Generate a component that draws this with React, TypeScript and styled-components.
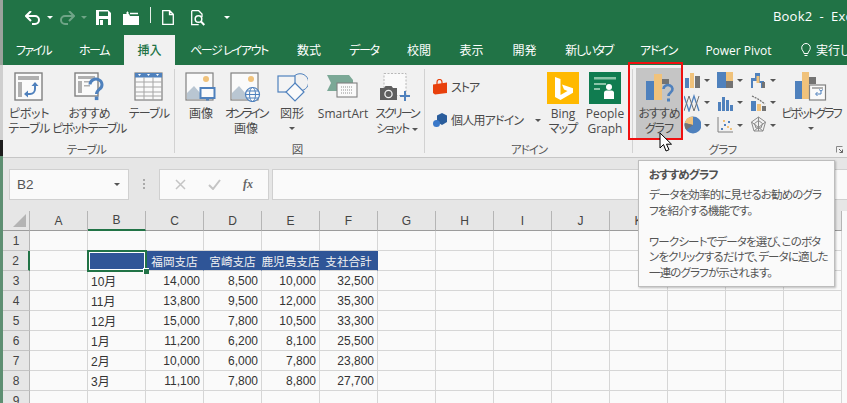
import React from 'react';
import styled, { createGlobalStyle } from 'styled-components';

const Global = createGlobalStyle`
	html, body {
		margin: 0;
		padding: 0;
		background: #fafafa;
	}
	body {
		width: 847px;
		height: 403px;
		overflow: hidden;
		font-family: "Open Sans", "Noto Sans CJK JP", sans-serif;
		font-feature-settings: "palt";
		font-size: 12px;
		color: #444;
	}
`;

const BLUE = '#4f81bd';
const ORANGE = '#f0c27b';
const GREY = '#737373';
const FRAME = '#808080';

const Screen = styled.div`
	display: flex;
	width: 847px;
	height: 403px;
	overflow: hidden;
`;

const LeftEdge = styled.div`
	width: 3px;
	flex: none;
	background: linear-gradient(#9aa39c 0 65px, #cfcfcf 65px 140px, #1d1d1d 140px 156px, #5e8f72 156px);
`;

const Window = styled.div`
	position: relative;
	flex: 1;
	display: flex;
	flex-direction: column;
	min-width: 0;
`;

const TitleBar = styled.div`
	display: flex;
	align-items: center;
	height: 35px;
	flex: none;
	background: #217346;
	color: #fff;
	overflow: hidden;
`;

const Qat = styled.div`
	display: flex;
	align-items: center;
	width: 770px;
	flex: none;
	padding-left: 21px;
	box-sizing: border-box;
	height: 100%;
`;

const QatItem = styled.span<{ $w: number }>`
	display: flex;
	align-items: center;
	justify-content: center;
	width: ${(p) => p.$w}px;
	flex: none;
`;

const QatSep = styled.span`
	width: 1px;
	height: 16px;
	background: #e6efe9;
	margin: 0 9px 5px 2px;
`;

const Title = styled.div`
	font-size: 13px;
	white-space: pre;
	letter-spacing: 0.2px;
	margin-bottom: 3px;
`;

const TabBar = styled.div`
	display: flex;
	height: 30px;
	flex: none;
	background: #217346;
	overflow: hidden;
`;

const Tab = styled.div<{ $w: number; $kern: number; $active?: boolean }>`
	display: flex;
	align-items: center;
	justify-content: center;
	gap: 5px;
	flex: none;
	width: ${(p) => p.$w}px;
	white-space: nowrap;
	font-size: 12px;
	letter-spacing: ${(p) => p.$kern}px;
	color: ${(p) => (p.$active ? '#217346' : '#fff')};
	background: ${(p) => (p.$active ? '#f1f1f1' : 'transparent')};
	font-weight: ${(p) => (p.$active ? 500 : 400)};
`;

const LastTab = styled.div`
	display: flex;
	align-items: center;
	gap: 5px;
	flex: none;
	padding-left: 14px;
	white-space: nowrap;
	font-size: 12px;
	color: #fff;
`;

const Ribbon = styled.div`
	display: flex;
	height: 93px;
	flex: none;
	box-sizing: border-box;
	background: #f1f1f1;
	border-bottom: 1px solid #c6c6c6;
`;

const Group = styled.section<{ $w: number; $pad: number; $last?: boolean }>`
	position: relative;
	width: ${(p) => p.$w}px;
	flex: none;
	box-sizing: border-box;
	display: flex;
	flex-direction: column;
	padding-left: ${(p) => p.$pad}px;
	&::after {
		content: '';
		display: ${(p) => (p.$last ? 'none' : 'block')};
		position: absolute;
		right: 0;
		top: 4px;
		bottom: 4px;
		width: 1px;
		background: #d2d2d2;
	}
`;

const GroupBody = styled.div`
	display: flex;
	height: 79px;
	padding-top: 3px;
	box-sizing: border-box;
`;

const GroupLabel = styled.div<{ $shift?: number; $kern?: number }>`
	height: 13px;
	line-height: 12px;
	font-size: 11.5px;
	text-align: center;
	color: #555;
	letter-spacing: ${(p) => p.$kern ?? -0.6}px;
	margin-left: ${(p) => -(p.$shift ?? 0)}px;
	padding-right: ${(p) => p.$shift ?? 0}px;
`;

const Launcher = styled.svg`
	position: absolute;
	right: 4px;
	bottom: 4px;
`;

const BigButton = styled.div<{ $w: number; $hover?: boolean }>`
	position: relative;
	width: ${(p) => p.$w}px;
	height: 70px;
	flex: none;
	display: flex;
	flex-direction: column;
	align-items: center;
	padding-top: 4px;
	box-sizing: border-box;
	background: ${(p) => (p.$hover ? '#c5c5c5' : 'transparent')};
	&::after {
		content: '';
		display: ${(p) => (p.$hover ? 'block' : 'none')};
		position: absolute;
		left: -8px;
		right: -1px;
		top: -6px;
		bottom: -2px;
		border: 2px solid #f01010;
	}
`;

const IconSlot = styled.div`
	height: 34px;
	flex: none;
	display: flex;
	justify-content: center;
`;

const Label = styled.div`
	line-height: 15px;
	font-size: 12px;
	text-align: center;
	white-space: nowrap;
	color: #4a4a4a;
`;

const Kana = styled.span<{ $k: number }>`
	letter-spacing: ${(p) => p.$k}px;
`;

const Caret = styled.span`
	display: inline-block;
	width: 0;
	height: 0;
	border-left: 3px solid transparent;
	border-right: 3px solid transparent;
	border-top: 3px solid #555;
	vertical-align: middle;
`;

const CaretLine = styled.div`
	line-height: 13px;
	height: 13px;
`;

const AddinColumn = styled.div`
	width: 118px;
	flex: none;
	display: flex;
	flex-direction: column;
	gap: 11px;
	padding: 8px 0 0 8px;
	box-sizing: border-box;
`;

const AddinRow = styled.div`
	display: flex;
	align-items: center;
	gap: 3px;
	height: 22px;
	white-space: nowrap;
	font-size: 12px;
	color: #4a4a4a;
`;

const AddinCaret = styled(Caret)`
	margin-left: 9px;
`;

const ChartGrid = styled.div`
	display: grid;
	grid-template-columns: 33px 33px 27px;
	grid-auto-rows: 22.5px;
	width: 95px;
	flex: none;
	padding: 1px 0 0 2px;
	box-sizing: border-box;
`;

const ChartCell = styled.div`
	display: flex;
	align-items: center;
	gap: 3px;
`;

const FormulaBar = styled.div`
	display: flex;
	align-items: flex-start;
	height: 53px;
	flex: none;
	box-sizing: border-box;
	background: #e6e6e6;
	padding: 11px 0 0 6px;
`;

const NameBox = styled.div`
	display: flex;
	align-items: center;
	justify-content: space-between;
	width: 120px;
	height: 31px;
	flex: none;
	box-sizing: border-box;
	background: #fafafa;
	border: 1px solid #d0d0d0;
	padding: 0 8px 0 7px;
	font-family: "Liberation Sans", sans-serif;
	font-size: 13.5px;
	color: #555;
`;

const Dots = styled.div`
	display: flex;
	flex-direction: column;
	gap: 2px;
	width: 30px;
	flex: none;
	align-items: center;
	margin-top: 10px;
	span {
		width: 2px;
		height: 2px;
		background: #aaa;
	}
`;

const FxBox = styled.div`
	display: flex;
	align-items: center;
	justify-content: space-around;
	width: 110px;
	height: 31px;
	flex: none;
	box-sizing: border-box;
	background: #fafafa;
	border: 1px solid #d0d0d0;
	padding: 0 4px;
	margin-right: 3px;
`;

const FxGlyph = styled.span`
	font-family: "Liberation Serif", serif;
	font-style: italic;
	font-weight: 700;
	font-size: 12px;
	color: #666;
`;

const FormulaInput = styled.div`
	flex: 1;
	height: 31px;
	box-sizing: border-box;
	background: #fafafa;
	border: 1px solid #d0d0d0;
	border-right: 0;
`;

const Sheet = styled.div`
	display: grid;
	grid-template-columns: 27px repeat(14, 58px);
	grid-auto-rows: 20px;
	background: #fafafa;
	font-family: "Liberation Sans", "Noto Sans CJK JP", sans-serif;
	font-size: 12px;
	color: #333;
`;

const Corner = styled.div`
	position: relative;
	background: #e6e6e6;
	border-right: 1px solid #b5b5b5;
	border-bottom: 1px solid #9c9c9c;
	&::after {
		content: '';
		position: absolute;
		right: 3px;
		bottom: 3px;
		width: 0;
		height: 0;
		border-left: 13px solid transparent;
		border-bottom: 13px solid #b4b4b4;
	}
`;

const ColHead = styled.div<{ $on?: boolean }>`
	display: flex;
	align-items: center;
	justify-content: center;
	box-sizing: border-box;
	background: #e6e6e6;
	border-right: 1px solid #b5b5b5;
	border-bottom: ${(p) => (p.$on ? '2px solid #217346' : '1px solid #9c9c9c')};
	color: #444;
`;

const RowHead = styled.div<{ $on?: boolean }>`
	display: flex;
	align-items: center;
	justify-content: center;
	box-sizing: border-box;
	background: #e6e6e6;
	border-right: ${(p) => (p.$on ? '2px solid #217346' : '1px solid #b5b5b5')};
	border-bottom: 1px solid #c4c4c4;
	color: #444;
`;

const Cell = styled.div<{ $kind?: 'head' | 'num' | 'text' | 'selected' }>`
	position: relative;
	display: flex;
	align-items: center;
	box-sizing: border-box;
	white-space: nowrap;
	overflow: ${(p) => (p.$kind === 'selected' ? 'visible' : 'hidden')};
	border-right: 1px solid ${(p) => (p.$kind === 'head' || p.$kind === 'selected' ? '#2f5597' : '#d6d6d6')};
	border-bottom: 1px solid #d6d6d6;
	background: ${(p) => (p.$kind === 'head' || p.$kind === 'selected' ? '#2f5597' : 'transparent')};
	color: ${(p) => (p.$kind === 'head' ? '#f2f2f2' : '#333')};
	justify-content: ${(p) => (p.$kind === 'num' ? 'flex-end' : p.$kind === 'head' ? 'center' : 'flex-start')};
	padding: ${(p) => (p.$kind === 'num' ? '0 3px 0 0' : p.$kind === 'head' ? '0' : '0 0 0 3px')};
	font-size: ${(p) => (p.$kind === 'head' ? '11.6px' : '12px')};
	font-feature-settings: normal;
`;

const SelectBox = styled.div`
	position: absolute;
	left: -1px;
	top: -1px;
	right: -2px;
	bottom: -2px;
	border: 2px solid #217346;
	outline: 1px solid #fff;
	outline-offset: -3px;
	z-index: 2;
	&::after {
		content: '';
		position: absolute;
		right: -4px;
		bottom: -4px;
		width: 5px;
		height: 5px;
		background: #217346;
		border: 1px solid #fff;
		border-width: 1px 0 0 1px;
	}
`;

const Tooltip = styled.div`
	position: absolute;
	left: 635px;
	top: 160px;
	width: 197px;
	height: 127px;
	box-sizing: border-box;
	padding: 6px 10px;
	background: #fafafa;
	border: 1px solid #bdbdbd;
	box-shadow: 1px 1px 2px rgba(0, 0, 0, 0.25);
	z-index: 5;
	color: #555;
	font-size: 11.5px;
	letter-spacing: -0.85px;
`;

const TipTitle = styled.div`
	font-weight: 700;
	line-height: 16px;
	margin-bottom: 4px;
	color: #505050;
`;

const TipLine = styled.div`
	line-height: 15.5px;
	min-height: 15.5px;
	white-space: nowrap;
`;

const Pointer = styled.svg`
	position: absolute;
	left: 656px;
	top: 132px;
	z-index: 6;
`;

/* ---------- drawings ---------- */

const DOTTED = '#b0b0b0';

const Frame = () => <rect x="1" y="1" width="27" height="27" fill="#fafafa" stroke={FRAME} strokeWidth="1.4" />;

const PivotIcon = () => (
	<svg width="30" height="30" viewBox="0 0 30 30">
		<Frame />
		<rect x="4" y="4" width="21" height="4" fill={DOTTED} />
		<rect x="4" y="10" width="4" height="15" fill={DOTTED} />
		<path d="M21 11v6a5 5 0 0 1-5 5h-3" fill="none" stroke={BLUE} strokeWidth="2" />
		<path d="M17.5 14l3.5-4 3.5 4zM14 18.5l-4 3.5 4 3.5z" fill={BLUE} />
	</svg>
);

const RecommendPivotIcon = () => (
	<svg width="30" height="32" viewBox="0 0 30 32">
		<rect x="1" y="1" width="23" height="23" fill="#fafafa" stroke={FRAME} strokeWidth="1.4" />
		<rect x="4" y="4" width="17" height="3" fill={DOTTED} />
		<rect x="4" y="9" width="4" height="12" fill={DOTTED} />
		<rect x="10" y="9" width="8" height="1.5" fill={DOTTED} />
		<rect x="10" y="13" width="6" height="1.5" fill={DOTTED} />
		<path d="M16 12.5a6 5.5 0 1 1 9.5 4.6c-2 1.6-3 2.4-3 4.9" fill="none" stroke={BLUE} strokeWidth="3" />
		<rect x="20.8" y="24.5" width="3.6" height="3.6" fill={BLUE} />
	</svg>
);

const TableIcon = () => (
	<svg width="30" height="30" viewBox="0 0 30 30">
		<rect x="1" y="1" width="27" height="27" fill="#fafafa" stroke={FRAME} strokeWidth="1.2" />
		<rect x="1" y="1" width="27" height="4.5" fill={BLUE} />
		{[10, 15, 20, 24].map((y) => (
			<line key={y} x1="1" x2="28" y1={y} y2={y} stroke="#a6a6a6" />
		))}
		{[10, 19].map((x) => (
			<line key={x} y1="5" y2="28" x1={x} x2={x} stroke="#a6a6a6" />
		))}
		<path d="M4 2h3l-1.5 2zM13 2h3l-1.5 2zM22 2h3l-1.5 2z" fill="#fff" />
	</svg>
);

const PictureBase = () => (
	<>
		<rect x="1" y="1" width="27" height="27" fill="#fafafa" stroke={FRAME} strokeWidth="1.2" />
		<circle cx="21" cy="7" r="3" fill={ORANGE} />
		<path d="M2 27V21l7-7 7 8 3 5z" fill="#b9c6d2" />
	</>
);

const PictureIcon = () => (
	<svg width="32" height="30" viewBox="0 0 32 30">
		<PictureBase />
		<rect x="15.5" y="16" width="14" height="10" fill="#fafafa" stroke={BLUE} strokeWidth="2" />
		<path d="M21 27h3v1.5h-3z" fill={BLUE} />
	</svg>
);

const OnlinePictureIcon = () => (
	<svg width="32" height="30" viewBox="0 0 32 30">
		<PictureBase />
		<circle cx="22.5" cy="22.5" r="7" fill="#fafafa" stroke={BLUE} strokeWidth="1.2" />
		<ellipse cx="22.5" cy="22.5" rx="3" ry="7" fill="none" stroke={BLUE} />
		<path d="M15.5 22.5h14M16.5 19h12M16.5 26h12" stroke={BLUE} fill="none" />
	</svg>
);

const ShapesIcon = () => (
	<svg width="32" height="32" viewBox="0 0 32 32">
		<path d="M17 5.5a8.5 8.5 0 1 1 9 13" fill="none" stroke={BLUE} strokeWidth="1" />
		<rect x="2" y="4" width="17" height="16" fill="#f4f4f4" stroke={BLUE} strokeWidth="1.2" />
		<path d="M19 11l9 9-9 9-9-9z" fill="#fafafa" stroke={BLUE} strokeWidth="1.2" />
	</svg>
);

const SmartArtIcon = () => (
	<svg width="32" height="30" viewBox="0 0 32 30">
		<path d="M0 3h22l4 5v3H10v8l-2 0H0l4-8z" fill="#7ba896" />
		<rect x="10" y="11" width="20" height="14" fill="#fafafa" stroke={FRAME} strokeWidth="1.1" />
		<path d="M14 15h12M14 18h12M14 21h12" stroke="#909090" strokeDasharray="1 1" />
	</svg>
);

const ScreenshotIcon = () => (
	<svg width="34" height="30" viewBox="0 0 34 30">
		<rect x="4" y="1.5" width="22" height="22" fill="#fafafa" stroke="#b8b8b8" strokeDasharray="2 1.5" />
		<path d="M0 16h4l1.5-2h6l1.5 2h4v12H0z" fill="#5f5f5f" />
		<circle cx="8.5" cy="22" r="3.6" fill="#5f5f5f" stroke="#f1f1f1" strokeWidth="1.3" />
		<path d="M24 19h2v4h4v2h-4v4h-2v-4h-4v-2h4z" fill={BLUE} />
	</svg>
);

const StoreIcon = () => (
	<svg width="15" height="16" viewBox="0 0 15 16">
		<path d="M0 5.5l14-2V14l-12 1.5L0 14z" fill="#e8400c" />
		<path d="M4 5V3a2.5 2.5 0 0 1 5 0v2" fill="none" stroke="#e8400c" strokeWidth="1.2" />
	</svg>
);

const AddinIcon = () => (
	<svg width="15" height="15" viewBox="0 0 15 15">
		<path d="M4 2.5L9 0l5 2.5V9l-5 3-5-3z" fill="#2a5d9c" />
		<circle cx="3.5" cy="10.5" r="3.5" fill="#3a78c9" />
	</svg>
);

const BingIcon = () => (
	<svg width="32" height="32" viewBox="0 0 32 32">
		<rect width="32" height="32" fill="#ffb900" />
		<path d="M8 5l5.5 2v16l7-4-3.5-1.6-2-5 11 3.8v4.6L13.5 28 8 25z" fill="#fff" />
	</svg>
);

const PeopleIcon = () => (
	<svg width="32" height="32" viewBox="0 0 32 32">
		<rect width="32" height="32" fill="#107c50" />
		<path d="M5 5h22v2.5H5zM5 11h12v2H5zM5 16h6v2H5z" fill="#8cc4a8" />
		<circle cx="20" cy="15" r="3" fill="#fff" />
		<path d="M15 27v-6q0-2.500 2.500-2.500h5q2.500 0 2.500 2.500v6z" fill="#fff" />
	</svg>
);

const RecommendChartIcon = () => (
	<svg width="32" height="32" viewBox="0 0 32 32">
		<rect x="3" y="9" width="8" height="19" fill={BLUE} />
		<rect x="11" y="2" width="8" height="26" fill={ORANGE} />
		<rect x="19" y="7" width="7" height="5" fill={GREY} />
		<path d="M20.500 17a4.500 4 0 1 1 7.300 3.200c-1.600 1.300-2.300 2-2.300 3.800" fill="none" stroke={BLUE} strokeWidth="2.600" />
		<rect x="24" y="26.500" width="3" height="3" fill={BLUE} />
	</svg>
);

const PivotChartIcon = () => (
	<svg width="32" height="30" viewBox="0 0 32 30">
		<rect x="0" y="9" width="7" height="18" fill={BLUE} />
		<rect x="7" y="0" width="7" height="27" fill={ORANGE} />
		<rect x="14" y="5" width="7" height="7" fill={GREY} />
		<rect x="14.500" y="13" width="16" height="15" fill="#fafafa" stroke={FRAME} strokeWidth="1.2" />
		<rect x="17" y="15" width="11" height="2" fill={DOTTED} />
		<path d="M26 19v3h-5M24 17.500l2 1.500 2-1.500M22.500 20l-2 2 2 2" fill="none" stroke={BLUE} />
	</svg>
);

const chartIcons = [
	<>
		<rect x="1" y="7" width="4" height="10" fill={BLUE} />
		<rect x="6" y="2" width="4" height="15" fill={ORANGE} />
		<rect x="11" y="5" width="5" height="12" fill={GREY} />
	</>,
	<>
		<rect x="0" y="1" width="9" height="16" fill={BLUE} />
		<rect x="9" y="1" width="7" height="9" fill={ORANGE} />
		<rect x="9" y="10" width="7" height="7" fill={GREY} />
	</>,
	<>
		<path d="M1 17V7h4V2h5v8h4v7h-3v-5H8V5H7v5H3v7z" fill={BLUE} />
		<rect x="6.500" y="5" width="3" height="7" fill={ORANGE} />
		<rect x="12" y="11" width="3" height="6" fill={GREY} />
	</>,
	<>
		<path d="M0 2l5 15 5-15 5 15" fill="none" stroke={BLUE} strokeWidth="1.3" />
		<path d="M0 17L5 2l5 15 5-15" fill="none" stroke={GREY} strokeWidth="1" />
	</>,
	<>
		<rect x="1" y="8" width="3" height="9" fill={BLUE} />
		<rect x="5" y="3" width="3" height="14" fill={BLUE} />
		<rect x="9" y="6" width="3" height="11" fill={BLUE} />
		<rect x="13" y="11" width="3" height="6" fill={BLUE} />
	</>,
	<>
		<rect x="1" y="7" width="5" height="10" fill={BLUE} />
		<rect x="7" y="10" width="4" height="7" fill={ORANGE} />
		<rect x="12" y="12" width="4" height="5" fill={GREY} />
		<path d="M2 2l6 3 7 5" fill="none" stroke={GREY} strokeDasharray="2 1" strokeWidth="1.300" />
	</>,
	<>
		<circle cx="9" cy="9" r="8.500" fill={BLUE} />
		<path d="M9 9V.500A8.500 8.500 0 0 0 .800 7z" fill={ORANGE} />
		<path d="M9 9L.800 7a8.500 8.500 0 0 0 1.500 7z" fill={GREY} />
	</>,
	<>
		<path d="M1 1v15h15" fill="none" stroke={FRAME} />
		<path d="M4 12h2v2H4zM7 8h2v2H7zM11 5h2v2h-2z" fill={BLUE} />
		<path d="M6 4h2v2H6zM10 10h2v2h-2zM13 12h2v2h-2z" fill={ORANGE} />
	</>,
	<path
		d="M8.500 1l7 5-2.500 9H4L1.500 6zM8.500 1v14M1.500 6l11.500 9M15.500 6L4 15M4.500 7.500l4-3 4 3-1.500 4.500H6z"
		fill="none"
		stroke="#8c8c8c"
	/>,
];

const UndoIcon = ({ dim }: { dim?: boolean }) => (
	<svg width="16" height="14" viewBox="0 0 16 14" style={dim ? { opacity: 0.35, transform: 'scaleX(-1)' } : undefined}>
		<path d="M2 5h8a4 4 0 0 1 0 8H7" fill="none" stroke="#fff" strokeWidth="2" />
		<path d="M6 0L1 5l5 5" fill="none" stroke="#fff" strokeWidth="2" />
	</svg>
);

const WhiteCaret = styled(Caret)<{ $dim?: boolean }>`
	border-top-color: #fff;
	opacity: ${(p) => (p.$dim ? 0.35 : 1)};
`;

const SaveIcon = () => (
	<svg width="15" height="15" viewBox="0 0 15 15">
		<path d="M0 0h12l3 3v12H0z" fill="#fff" />
		<rect x="3" y="1.500" width="9" height="4.500" fill="#217346" />
		<rect x="3" y="9" width="9" height="6" fill="#217346" />
		<rect x="4" y="10" width="3" height="5" fill="#fff" />
	</svg>
);

const FolderIcon = () => (
	<svg width="16" height="14" viewBox="0 0 16 14">
		<path d="M0 3h6l1 2h9v9H0z" fill="#fff" />
		<path d="M3 2h3M4.500 .500v3" stroke="#fff" />
		<path d="M7 2.500h8" stroke="#fff" strokeWidth="1.500" />
	</svg>
);

const NewDocIcon = () => (
	<svg width="12" height="15" viewBox="0 0 12 15">
		<path d="M.700.700h7l3.600 3.600v10H.700zM7.500 1v3.500H11" fill="none" stroke="#fff" strokeWidth="1.300" />
	</svg>
);

const PreviewIcon = () => (
	<svg width="14" height="16" viewBox="0 0 14 16">
		<path d="M.700.700h7l3.300 3.300v3M.700.700v14h7" fill="none" stroke="#fff" strokeWidth="1.300" />
		<circle cx="7.500" cy="9" r="3.300" fill="none" stroke="#fff" strokeWidth="1.500" />
		<path d="M10 11.500l3.300 3.500" stroke="#fff" strokeWidth="2" />
	</svg>
);

const BulbIcon = () => (
	<svg width="10" height="14" viewBox="0 0 10 14">
		<path d="M3 10.500c0-2-2.300-3-2.300-5.700a4.300 4.300 0 0 1 8.600 0C9.300 7.500 7 8.500 7 10.500zM3.500 12.500h3" fill="none" stroke="#fff" />
	</svg>
);

/* ---------- data ---------- */

const TABS = [
	{ label: 'ファイル', w: 61, kern: -1.6 },
	{ label: 'ホーム', w: 60, kern: -1.5 },
	{ label: '挿入', w: 51, kern: 0 },
	{ label: 'ページ レイアウト', w: 108, kern: -1.5 },
	{ label: '数式', w: 52, kern: 0 },
	{ label: 'データ', w: 58, kern: -1.2 },
	{ label: '校閲', w: 52, kern: 0 },
	{ label: '表示', w: 53, kern: 0 },
	{ label: '開発', w: 53, kern: 0 },
	{ label: '新しいタブ', w: 76, kern: -1.4 },
	{ label: 'アドイン', w: 63, kern: -1.2 },
	{ label: 'Power Pivot', w: 97, kern: 0 },
];
const COLUMNS = 'ABCDEFGHIJKLMN'.split('');
const DATA = [
	['10月', '14,000', '8,500', '10,000', '32,500'],
	['11月', '13,800', '9,500', '12,000', '35,300'],
	['12月', '15,000', '7,800', '10,500', '33,300'],
	['1月', '11,200', '6,200', '8,100', '25,500'],
	['2月', '10,000', '6,000', '7,800', '23,800'],
	['3月', '11,100', '7,800', '8,800', '27,700'],
];
const HEADS = ['福岡支店', '宮崎支店', '鹿児島支店', '支社合計'];

const emptyCells = (from: number, row: number) =>
	COLUMNS.slice(from).map((c) => <Cell key={`${c}${row}`} />);

const App = () => (
	<Screen>
		<Global />
		<LeftEdge />
		<Window>
			<TitleBar>
				<Qat>
					<QatItem $w={18}><UndoIcon /></QatItem>
					<QatItem $w={16}><WhiteCaret /></QatItem>
					<QatItem $w={18}><UndoIcon dim /></QatItem>
					<QatItem $w={16}><WhiteCaret $dim /></QatItem>
					<QatItem $w={22}><SaveIcon /></QatItem>
					<QatItem $w={34}><FolderIcon /></QatItem>
					<QatSep />
					<QatItem $w={16}><NewDocIcon /></QatItem>
					<QatItem $w={44}><PreviewIcon /></QatItem>
					<QatItem $w={14}><WhiteCaret /></QatItem>
				</Qat>
				<Title>Book2  -  Excel</Title>
			</TitleBar>
			<TabBar>
				{TABS.map((t) => (
					<Tab key={t.label} $w={t.w} $kern={t.kern} $active={t.label === '挿入'}>{t.label}</Tab>
				))}
				<LastTab><BulbIcon />実行したい作業</LastTab>
			</TabBar>
			<Ribbon>
				<Group $w={172} $pad={5}>
					<GroupBody>
						<BigButton $w={42}><IconSlot><PivotIcon /></IconSlot><Label><Kana $k={-0.3}>ピボット</Kana><br /><Kana $k={-0.6}>テーブル</Kana></Label></BigButton>
						<BigButton $w={78}><IconSlot><RecommendPivotIcon /></IconSlot><Label><Kana $k={-1}>おすすめ</Kana><br /><Kana $k={-1.4}>ピボットテーブル</Kana></Label></BigButton>
						<BigButton $w={42}><IconSlot><TableIcon /></IconSlot><Label><Kana $k={-0.8}>テーブル</Kana></Label></BigButton>
					</GroupBody>
					<GroupLabel $shift={5}>テーブル</GroupLabel>
				</Group>
				<Group $w={250} $pad={5}>
					<GroupBody>
						<BigButton $w={42}><IconSlot><PictureIcon /></IconSlot><Label>画像</Label></BigButton>
						<BigButton $w={48}><IconSlot><OnlinePictureIcon /></IconSlot><Label><Kana $k={-2.2}>オンライン</Kana><br />画像</Label></BigButton>
						<BigButton $w={44}><IconSlot><ShapesIcon /></IconSlot><Label>図形</Label><CaretLine><Caret /></CaretLine></BigButton>
						<BigButton $w={58}><IconSlot><SmartArtIcon /></IconSlot><Label>SmartArt</Label></BigButton>
						<BigButton $w={50}><IconSlot><ScreenshotIcon /></IconSlot><Label><Kana $k={-2}>スクリーン</Kana><br /><Kana $k={-1.5}>ショット</Kana> <Caret /></Label></BigButton>
					</GroupBody>
					<GroupLabel $shift={5} $kern={0}>図</GroupLabel>
				</Group>
				<Group $w={208} $pad={0}>
					<GroupBody>
						<AddinColumn>
							<AddinRow><StoreIcon /><Kana $k={-1}>ストア</Kana></AddinRow>
							<AddinRow><AddinIcon /><Kana $k={-0.8}>個人用アドイン</Kana><AddinCaret /></AddinRow>
						</AddinColumn>
						<BigButton $w={40}><IconSlot><BingIcon /></IconSlot><Label>Bing<br /><Kana $k={-0.8}>マップ</Kana></Label></BigButton>
						<BigButton $w={44}><IconSlot><PeopleIcon /></IconSlot><Label>People<br />Graph</Label></BigButton>
					</GroupBody>
					<GroupLabel $kern={-1}>アドイン</GroupLabel>
				</Group>
				<Group $w={214} $pad={3} $last>
					<GroupBody>
						<BigButton $w={46} $hover><IconSlot><RecommendChartIcon /></IconSlot><Label><Kana $k={-1}>おすすめ</Kana><br /><Kana $k={-1}>グラフ</Kana></Label></BigButton>
						<ChartGrid>
							{chartIcons.map((icon, i) => (
								<ChartCell key={i}>
									<svg width="17" height="18" viewBox="0 0 17 18">{icon}</svg>
									<Caret />
								</ChartCell>
							))}
						</ChartGrid>
						<BigButton $w={68}><IconSlot><PivotChartIcon /></IconSlot><Label><Kana $k={-1.9}>ピボットグラフ</Kana></Label><CaretLine><Caret /></CaretLine></BigButton>
					</GroupBody>
					<GroupLabel $shift={19}>グラフ</GroupLabel>
					<Launcher width="7" height="7" viewBox="0 0 7 7">
						<path d="M.5 .5h6M.5 .5v6" stroke="#888" fill="none" />
						<path d="M3 3l3.500 3.500M6.500 3.500v3h-3" stroke="#666" fill="none" />
					</Launcher>
				</Group>
			</Ribbon>
			<FormulaBar>
				<NameBox>B2<Caret /></NameBox>
				<Dots><span /><span /><span /></Dots>
				<FxBox>
					<svg width="11" height="11" viewBox="0 0 11 11"><path d="M1 1l9 9M10 1l-9 9" stroke="#c4c4c4" strokeWidth="1.500" /></svg>
					<svg width="13" height="11" viewBox="0 0 13 11"><path d="M1 6l4 4 7-9" stroke="#c4c4c4" strokeWidth="2" fill="none" /></svg>
					<FxGlyph>fx</FxGlyph>
				</FxBox>
				<FormulaInput />
			</FormulaBar>
			<Sheet>
				<Corner />
				{COLUMNS.map((c) => (
					<ColHead key={c} $on={c === 'B'}>{c}</ColHead>
				))}
				<RowHead>1</RowHead>
				{emptyCells(0, 1)}
				<RowHead $on>2</RowHead>
				<Cell />
				<Cell $kind="selected"><SelectBox /></Cell>
				{HEADS.map((h) => (
					<Cell key={h} $kind="head">{h}</Cell>
				))}
				{emptyCells(6, 2)}
				{DATA.map((row, r) => (
					<React.Fragment key={row[0]}>
						<RowHead>{r + 3}</RowHead>
						<Cell />
						<Cell $kind="text">{row[0]}</Cell>
						{row.slice(1).map((v, i) => (
							<Cell key={i} $kind="num">{v}</Cell>
						))}
						{emptyCells(6, r + 3)}
					</React.Fragment>
				))}
				<RowHead>9</RowHead>
				{emptyCells(0, 9)}
			</Sheet>
			<Tooltip>
				<TipTitle>おすすめグラフ</TipTitle>
				<TipLine>データを効率的に見せるお勧めのグラ</TipLine>
				<TipLine>フを紹介する機能です。</TipLine>
				<TipLine />
				<TipLine>ワークシートでデータを選び、このボタ</TipLine>
				<TipLine>ンをクリックするだけで、データに適した</TipLine>
				<TipLine>一連のグラフが示されます。</TipLine>
			</Tooltip>
			<Pointer width="14" height="21" viewBox="0 0 14 21">
				<path d="M1 1v15l3.500-3.500L7 19l3-1.300-2.500-5.500H12.500z" fill="#fff" stroke="#000" />
			</Pointer>
		</Window>
	</Screen>
);

export default App;
